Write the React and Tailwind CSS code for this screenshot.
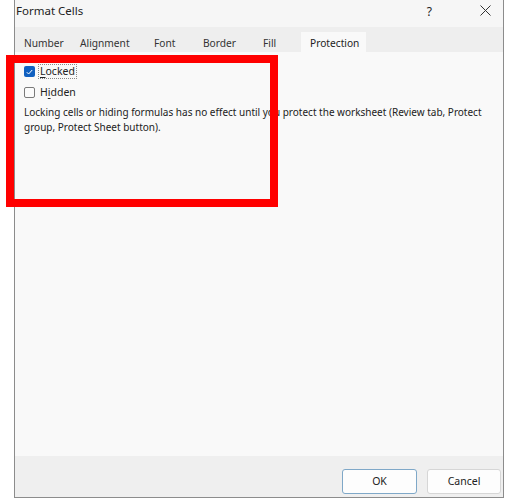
import React from "react";

const font = { fontFamily: '"Noto Sans", "Open Sans", sans-serif' };

const tabs = [
  { label: "Number", w: "w-[56px]" },
  { label: "Alignment", w: "w-[74px]" },
  { label: "Font", w: "w-[49px]" },
  { label: "Border", w: "w-[60px]" },
  { label: "Fill", w: "w-[47px]" },
];

export default function App() {
  return (
    <div className="relative w-[511px] h-[504px] bg-white overflow-hidden text-[#1a1a1a]" style={font}>
      <div className="ml-[14px] w-[490px] h-[498px] flex flex-col border-l border-r border-b border-[#8c8c8c]">
        {/* Title bar */}
        <div className="h-[27px] bg-[#f6f6f6] flex items-center text-[11.5px] text-[#222]">
          <span className="-mt-[6px] ml-px">Format Cells</span>
          <span className="ml-auto -mt-[4px] mr-[48px] text-[12px]">?</span>
          <svg className="mr-[12px] -mt-[6px]" width="11" height="11" viewBox="0 0 11 11">
            <path d="M0.5 0.5 L10.5 10.5 M10.5 0.5 L0.5 10.5" stroke="#333" strokeWidth="1" fill="none" />
          </svg>
        </div>
        {/* Tab strip */}
        <div className="h-[25px] bg-[#eeeeee] flex items-end text-[10.2px] text-[#333]">
          {tabs.map((t) => (
            <div key={t.label} className={`${t.w} h-[20px] pl-[9px] pt-[3px] flex items-center`}>
              {t.label}
            </div>
          ))}
          <div className="w-[65px] h-[20px] pl-[9px] pt-[3px] flex items-center bg-[#f9f9f9] text-[#222]">Protection</div>
        </div>
        {/* Content */}
        <div className="flex-1 bg-[#f9f9f9] pl-[9px] pr-[14px] pt-[12px] text-[10px] text-[#222]">
          <div className="flex items-center h-[15px]">
            <div className="w-[11px] h-[11px] rounded-[2px] bg-[#1060c0] flex items-center justify-center">
              <svg width="7" height="6" viewBox="0 0 7 6">
                <path d="M0.8 3.2 L2.6 5 L6.2 1" stroke="#fff" strokeWidth="1" fill="none" />
              </svg>
            </div>
            <span className="ml-[3px] px-px border border-dotted border-[#888] leading-[13px] text-[10.5px]">
              <span className="underline underline-offset-2">L</span>ocked
            </span>
          </div>
          <div className="flex items-center h-[15px] mt-[6px]">
            <div className="w-[11px] h-[11px] rounded-[2px] border border-[#7a7a7a] bg-[#fbfbfb]" />
            <span className="ml-[4px] leading-[13px] pl-px text-[10.5px]">
              H<span className="underline underline-offset-2">i</span>dden
            </span>
          </div>
          <p className="mt-[5px] leading-[14.5px]">
            Locking cells or hiding formulas has no effect until you protect the worksheet (Review tab, Protect group, Protect Sheet button).
          </p>
        </div>
        {/* Footer */}
        <div className="h-[41px] bg-[#efefef] flex items-start pt-[13px] text-[10.5px] text-[#222]">
          <div className="ml-[327px] w-[75px] h-[25px] flex items-center justify-center bg-[#fdfdfd] border border-[#7fa8c8] rounded-[3px]">OK</div>
          <div className="ml-[10px] w-[74px] h-[25px] flex items-center justify-center bg-[#fdfdfd] border border-[#d6d6d6] rounded-[3px]">Cancel</div>
        </div>
      </div>
      {/* Red annotation rectangle */}
      <div className="absolute left-[6px] top-[55px] w-[272px] h-[152px] border-[8px] border-[#ff0000]" />
    </div>
  );
}
